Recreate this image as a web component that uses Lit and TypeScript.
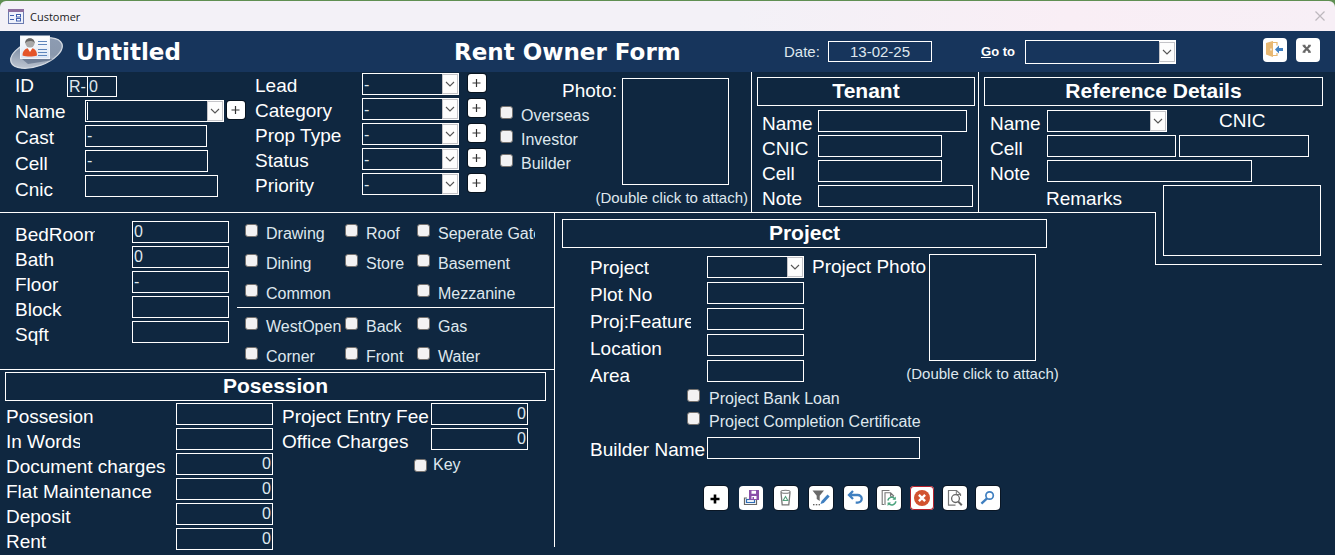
import { LitElement, html, css, svg } from "lit";
import { customElement } from "lit/decorators.js";

type Field = { id: string; label: string; cls: string; value?: string; kind?: "select" | "money" };

const LEAD: Field[] = [
  { id: "lead", label: "Lead", cls: "w97", value: "-" },
  { id: "category", label: "Category", cls: "w97", value: "-" },
  { id: "proptype", label: "Prop Type", cls: "w97", value: "-" },
  { id: "status", label: "Status", cls: "w97", value: "-" },
  { id: "priority", label: "Priority", cls: "w97", value: "-" },
];

const TENANT: Field[] = [
  { id: "t-name", label: "Name", cls: "w149" },
  { id: "t-cnic", label: "CNIC", cls: "w124" },
  { id: "t-cell", label: "Cell", cls: "w124" },
  { id: "t-note", label: "Note", cls: "w155" },
];

const ROOMS: Field[] = [
  { id: "bedroom", label: "BedRoom", cls: "w97", value: "0" },
  { id: "bath", label: "Bath", cls: "w97", value: "0" },
  { id: "floor", label: "Floor", cls: "w97", value: "-" },
  { id: "block", label: "Block", cls: "w97" },
  { id: "sqft", label: "Sqft", cls: "w97" },
];

const POSSESSION: Field[] = [
  { id: "possesion", label: "Possesion", cls: "w97" },
  { id: "words", label: "In Words", cls: "w97" },
  { id: "doc", label: "Document charges", cls: "w97", value: "0", kind: "money" },
  { id: "flat", label: "Flat Maintenance", cls: "w97", value: "0", kind: "money" },
  { id: "deposit", label: "Deposit", cls: "w97", value: "0", kind: "money" },
  { id: "rent", label: "Rent", cls: "w97", value: "0", kind: "money" },
];

const FEES: Field[] = [
  { id: "entry", label: "Project Entry Fee", cls: "w97", value: "0", kind: "money" },
  { id: "office", label: "Office Charges", cls: "w97", value: "0", kind: "money" },
];

const PROJECT: Field[] = [
  { id: "project", label: "Project", cls: "w97", kind: "select" },
  { id: "plot", label: "Plot No", cls: "w97" },
  { id: "feature", label: "Proj:Features", cls: "w97" },
  { id: "location", label: "Location", cls: "w97" },
  { id: "area", label: "Area", cls: "w97" },
];

const icons = {
  add: svg`<path d="M11 8.500v9M6.500 13h9" stroke="#000" stroke-width="2.600"/>`,
  save: svg`<path d="M8 12H5.500v6.500h12V14" fill="none" stroke="#666" stroke-width="1.200"/><rect x="7.500" y="13.500" width="8" height="3" fill="#fff" stroke="#2f6db5" stroke-width="1.200"/><path d="M10 4h10v10H10z" fill="#8a4fa8"/><path d="M12.500 4.800h4.500v3h-4.500zM12.500 10h5v3h-5z" fill="#fff"/><path d="M13.500 11h1.500v2h-1.500z" fill="#8a4fa8"/>`,
  bin: svg`<path d="M7 6.500l1.200 12.300h6.600L16 6.500" fill="none" stroke="#777" stroke-width="1.300"/><ellipse cx="11.500" cy="5.800" rx="4.600" ry="1.500" fill="#fff" stroke="#777" stroke-width="1.100"/><path d="M11.500 10.500l2.300 4H9.200z" fill="none" stroke="#55a07c" stroke-width="1.100"/>`,
  filter: svg`<path d="M3.500 4.500h11.500l-4.300 5.300V15l-3-2V9.800z" fill="#6a6a6a"/><path d="M11.500 18l1-3 6-6.500 2.200 2-6 6.500z" fill="#3f7fc0"/><path d="M4 18.700h7" stroke="#333" stroke-width="1.100" stroke-dasharray="1.500 1.300"/>`,
  undo: svg`<path d="M9 5L5 9l4 4M5.500 9h8.200a4 3.800 0 010 7.600h-2" fill="none" stroke="#3f7fc0" stroke-width="2.300"/>`,
  refresh: svg`<path d="M7 18.500H5.200V4.500h7.300M8 19V6.800h5.600l3.400 3.300M13.500 7v3.300H17" fill="none" stroke="#777" stroke-width="1.100"/><path d="M10.800 14.500a4 4 0 017-1.800M18.800 15.200a4 4 0 01-7 2.300" fill="none" stroke="#4aa37d" stroke-width="1.500"/><path d="M18.800 10.400v3.400h-3.400zM10.600 20v-3.500h3.400z" fill="#4aa37d"/>`,
  cancel: svg`<circle cx="12" cy="12" r="8" fill="#d2522f"/><path d="M8.900 8.900l6.200 6.200M15.100 8.900l-6.200 6.200" stroke="#fff" stroke-width="2.400"/>`,
  preview: svg`<path d="M17.500 10V8.200l-4-3.700h-8v14.600h7" fill="none" stroke="#777" stroke-width="1.200"/><path d="M13.300 4.500v4h4.200" fill="none" stroke="#777"/><circle cx="12.500" cy="12.600" r="3.900" fill="#fff" stroke="#666" stroke-width="1.300"/><path d="M15.300 15.600l3.500 3.700" stroke="#666" stroke-width="2"/>`,
  find: svg`<circle cx="13.600" cy="9.500" r="3.700" fill="none" stroke="#3f7fc0" stroke-width="1.700"/><path d="M11 12.300l-5.600 5.300" stroke="#3f7fc0" stroke-width="2.300"/>`,
};

@customElement("app-root")
export class AppRoot extends LitElement {
  static styles = css`
    :host {
      --panel: #0f2740;
      --bar: #17355c;
      --line: #ffffff;
      --soft: #dfe7ee;
      display: block;
      min-height: 100vh;
      background: var(--panel);
      color: #fff;
      font-family: "Liberation Sans", Arial, sans-serif;
      font-size: 16px;
    }
    * { box-sizing: border-box; }
    h1, h2 { margin: 0; }
    input, select, textarea, button { font: inherit; color: inherit; margin: 0; border-radius: 0; outline: none; }

    .top-edge { background: #5f8f52; padding-top: 1px; }
    .titlebar {
      display: flex; align-items: center; gap: 6px; height: 30px; padding: 0 9px 0 8px;
      background: linear-gradient(90deg, #f3f1f7 0 55%, #f9eef5 80%, #f7eff6);
      border-radius: 6px 6px 0 0; color: #1b1b1b; font: 11px "Open Sans", sans-serif;
    }
    .titlebar .grow { flex: 1; }
    .win-close { display: flex; background: none; border: 0; padding: 0; }

    .header {
      display: grid;
      grid-template-columns: minmax(0, 454fr) minmax(0, 330fr) minmax(0, 197fr) minmax(0, 282fr) minmax(0, 72fr);
      align-items: center; height: 41px; background: var(--bar);
    }
    .brand { display: flex; align-items: center; gap: 12px; padding-left: 10px; }
    .heading { font: bold 23px/30px "DejaVu Sans", sans-serif; white-space: nowrap; }
    .line { display: flex; align-items: center; }
    .date { gap: 9px; font-size: 15px; }
    .date .light { width: 35px; }
    .goto { gap: 10px; }
    .goto label { font-size: 13px; font-weight: bold; white-space: nowrap; }
    .actions { gap: 9px; align-self: start; padding-top: 7px; }

    .form {
      display: grid;
      grid-template-columns: minmax(0, 555fr) minmax(0, 197fr) minmax(0, 227fr) minmax(0, 176fr) minmax(0, 180fr);
      grid-template-rows: 141px 52px auto;
    }
    .person { grid-area: 1 / 1 / 2 / 3; border-right: 1px solid var(--line); border-bottom: 1px solid var(--line); display: flex; padding-left: 15px; align-items: flex-start; }
    .tenant { grid-area: 1 / 3 / 2 / 4; border-right: 1px solid var(--line); border-bottom: 1px solid var(--line); padding: 5px 3px 0 5px; }
    .reference { grid-area: 1 / 4 / 2 / 6; padding: 5px 12px 0 5px; }
    .ref-rule { grid-area: 1 / 4 / 2 / 5; border-bottom: 1px solid var(--line); align-self: end; padding: 0 0 1px 67px; }
    .remarks {
      grid-area: 1 / 5 / 3 / 6; align-self: end; height: 53px; margin-right: 13px;
      border-left: 1px solid var(--line); border-bottom: 1px solid var(--line);
      display: flex; align-items: flex-end; padding: 0 1px 8px 7px;
    }
    .remarks textarea { width: 100%; height: 71px; resize: none; background: var(--panel); border: 1px solid var(--line); padding: 1px; }
    .left { grid-area: 2 / 1 / 4 / 2; }
    .project { grid-area: 2 / 2 / 4 / 5; align-self: start; margin-left: -1px; border-left: 1px solid var(--line); padding: 6px 0 37px 7px; }
    .person > *, .labels, .stack, .box, .combo, .plus, .tool, .photo { flex-shrink: 0; }

    .band { border: 1px solid var(--line); height: 29px; font-size: 21px; line-height: 26px; font-weight: bold; text-align: center; }
    .labels, .stack { display: flex; flex-direction: column; align-items: flex-start; }
    .stack { gap: 3px; }
    .labels label, .lab { font-size: 19px; line-height: 25px; white-space: nowrap; }
    .tall label { line-height: 26px; }
    .taller label { line-height: 27px; }
    .light { color: var(--soft); }
    .box {
      display: block; height: 22px; background: transparent; border: 1px solid var(--line);
      padding: 0 1px; font-size: 16px; color: var(--soft);
    }
    .low { height: 21px; }
    .money { text-align: right; }
    .center { text-align: center; font-size: 15px; }
    .combo { display: grid; grid-template-columns: 1fr 17px; }
    .combo select { grid-area: 1 / 1 / 2 / 3; width: 100%; height: 22px; appearance: none; background: transparent; border: 1px solid var(--line); padding: 0 1px; color: var(--soft); }
    .combo.big select { height: 24px; }
    .combo svg { grid-area: 1 / 2 / 2 / 3; width: 16px; height: calc(100% - 2px); margin-top: 1px; background: #fdfdfd; pointer-events: none; }
    .combo option { color: #111; }
    .combo.active select { background: linear-gradient(#fff, #fff) 1px 1px / 1px 18px no-repeat; }

    .w21 { width: 21px; } .w30 { width: 30px; } .w97 { width: 97px; } .w104 { width: 104px; }
    .w120 { width: 120px; } .w122 { width: 122px; } .w123 { width: 123px; } .w124 { width: 124px; } .w129 { width: 129px; } .w130 { width: 130px; }
    .w133 { width: 133px; } .w139 { width: 139px; } .w149 { width: 149px; } .w151 { width: 151px; }
    .w155 { width: 155px; } .w205 { width: 205px; } .w213 { width: 213px; }

    .plus { width: 18px; height: 18px; padding: 0; border: 0; background: #fff; border-radius: 3px; box-shadow: 0 0 0 1px #07131f; display: flex; }
    .tool { width: 24px; height: 24px; padding: 0; border: 0; background: #fff; border-radius: 4px; box-shadow: 0 0 0 1px #0a1624; display: flex; }
    .flat { box-shadow: none; }
    .danger { box-shadow: inset 0 0 0 1px #b5202c; }

    .check { display: flex; align-items: flex-start; gap: 8px; line-height: 20px; white-space: nowrap; color: var(--soft); }
    .check input { appearance: none; flex: none; width: 13px; height: 13px; background: #f3f2f3; border: 1px solid #76726f; border-radius: 3px; }

    .own-labels { width: 52px; padding-top: 1px; }
    .own { width: 179px; padding-top: 4px; }
    .own .inset { margin-left: 18px; }
    .id-row { display: flex; }
    .id-row .w30 { margin-left: -1px; }
    .name-row { display: flex; gap: 3px; margin-left: 18px; }
    .name-row .plus { margin-top: 1px; }
    .lead-labels { width: 107px; margin-left: 9px; padding-top: 1px; }
    .lead-fields { padding-top: 1px; }
    .plus-col { gap: 7px; padding: 2px 0 0 9px; }
    .media { display: grid; grid-template-columns: 117px 107px 14px; column-gap: 5px; margin-left: 14px; padding-top: 6px; }
    .media .col { display: flex; flex-direction: column; gap: 4px; align-items: flex-start; }
    .media .lab { align-self: flex-end; line-height: 23px; padding-top: 1px; }
    .photo { width: 107px; height: 107px; border: 1px solid var(--line); background: transparent; padding: 0; }
    .caption { font-size: 15px; line-height: 18px; color: var(--soft); white-space: nowrap; }
    .media .caption { grid-column: 1 / 4; padding-top: 4px; justify-self: end; }

    .tenant-body { display: flex; padding: 4px 0 0 5px; }
    .tenant-body .labels { width: 56px; padding-top: 1px; }
    .ref-body { display: flex; padding: 4px 0 0 6px; }
    .ref-body .labels { width: 57px; padding-top: 1px; }
    .ref-line { display: flex; gap: 3px; }
    .ref-line .lab { padding-left: 49px; line-height: 22px; }

    .rooms { display: flex; border-bottom: 1px solid var(--line); height: 157px; }
    .rooms .labels { width: 132px; padding: 9px 0 0 15px; }
    .rooms .labels label { width: 80px; overflow: hidden; }
    .rooms .stack { padding-top: 8px; width: 105px; }
    .amenities { flex: 1; min-width: 0; }
    .grid3 { display: grid; grid-template-columns: 100px 72px 1fr; align-content: start; padding: 9px 0 0 8px; row-gap: 10px; }
    .grid3.first { height: 95px; border-bottom: 1px solid var(--line); padding-top: 11px; }
    .grid3 .clip { width: 118px; overflow: hidden; }

    .poss { padding: 2px 9px 0 5px; }
    .poss-body { display: flex; padding: 2px 0 0 1px; }
    .poss-body .labels { width: 170px; padding-top: 1px; }
    .poss-body .labels label[for="words"] { width: 74px; overflow: hidden; }
    .fees { padding-left: 9px; }
    .fees-row { display: flex; }
    .poss-body .fees-row .labels { width: 149px; }
    .key { padding: 4px 0 0 132px; }
    .key .check { align-items: center; gap: 6px; line-height: 14px; }

    .project .band { width: 485px; max-width: 100%; }
    .proj-body { display: flex; padding: 6px 0 0 28px; align-items: flex-start; }
    .proj-body .labels { width: 117px; }
    .proj-body .labels label { max-width: 101px; overflow: hidden; }
    .proj-body .stack { gap: 4px; padding-top: 2px; }
    .proj-body .lab { width: 117px; margin-left: 8px; line-height: 26px; }
    .proj-photo { display: flex; flex-direction: column; align-items: center; width: 107px; }
    .proj-photo .caption { padding-top: 4px; }
    .proj-checks { display: flex; flex-direction: column; gap: 3px; padding-left: 125px; }
    .proj-checks .check { gap: 9px; }
    .builder { display: flex; padding: 5px 0 0 28px; }
    .builder .lab { width: 117px; line-height: 26px; }
    .toolbar { display: flex; gap: 11px; padding: 23px 0 0 142px; }
    .group { display: flex; gap: 11px; }
    .group.tight { gap: 9px; }
  `;

  private label(f: Field) {
    return html`<label for=${f.id}>${f.label}</label>`;
  }

  private combo(id: string, cls: string, value = "") {
    return html`<div class="combo ${cls}">
      <select id=${id}><option>${value}</option></select>
      <svg viewBox="0 0 16 20"><rect x=".5" y=".5" width="15" height="19" fill="#fdfdfd" stroke="#c4c4c8"/><path d="M4 8l4 4 4-4" fill="none" stroke="#555" stroke-width="1.100"/></svg>
    </div>`;
  }

  private field(f: Field) {
    return f.kind === "select"
      ? this.combo(f.id, f.cls, f.value)
      : html`<input class="box ${f.cls} ${f.kind ?? ""}" id=${f.id} .value=${f.value ?? ""}>`;
  }

  private check(text: string, cls = "") {
    return html`<label class="check ${cls}"><input type="checkbox">${text}</label>`;
  }

  private plus(name: string) {
    return html`<button class="plus" aria-label="Add ${name}"><svg width="18" height="18"><path d="M8.500 5v8M4.500 9h8" stroke="#333" stroke-width="1.200"/></svg></button>`;
  }

  private tool(name: keyof typeof icons, cls = "") {
    return html`<button class="tool ${cls}" aria-label=${name}><svg width="24" height="24" viewBox="0 0 24 24">${icons[name]}</svg></button>`;
  }

  render() {
    return html`
      <div class="top-edge"><div class="titlebar">
        <svg width="16" height="15" viewBox="0 0 16 15"><rect x=".5" y=".5" width="15" height="14" fill="#eef1fb" stroke="#6b7bb0"/><path d="M0 0h16v3H0z" fill="#8d6f9f"/><path d="M2 6.500h4M2 10.500h4" stroke="#3f5fae"/><rect x="8.500" y="5.500" width="4" height="2.500" fill="#fff" stroke="#3f5fae"/><rect x="8.500" y="9.500" width="4" height="2.500" fill="#fff" stroke="#3f5fae"/></svg>
        <span>Customer</span><span class="grow"></span>
        <button class="win-close" aria-label="Close window"><svg width="12" height="12"><path d="M1.500 1.500l9 9M10.500 1.500l-9 9" stroke="#bdb8be" stroke-width="1.200"/></svg></button>
      </div></div>

      <div class="header">
        <div class="brand">
          <svg width="54" height="36" viewBox="0 0 54 36">
            <defs>
              <linearGradient id="disc" x1="0" y1="1" x2="1" y2="0"><stop offset="0" stop-color="#d3d8e0"/><stop offset=".5" stop-color="#8a98ad"/><stop offset="1" stop-color="#8e9db4"/></linearGradient>
              <linearGradient id="card" x1="0" y1="0" x2="0" y2="1"><stop offset="0" stop-color="#fff"/><stop offset="1" stop-color="#dbe6f5"/></linearGradient>
            </defs>
            <ellipse cx="26.500" cy="19" rx="27" ry="13" transform="rotate(-20 26.500 19)" fill="url(#disc)" stroke="#d5dbe3" stroke-width="1.300"/>
            <path d="M12 25l27-1 4 2-25 4z" fill="#3f5170" opacity=".5"/>
            <rect x="10.500" y="2" width="29" height="22.500" fill="url(#card)" stroke="#f2f5fa"/>
            <path d="M12.500 21.500c0-5 3-7.500 7.500-7.500s7 2.500 7 7.500c-4 1.300-10.500 1.300-14.500 0z" fill="#e4552a"/>
            <path d="M17.500 14l2.500 4 2.500-4z" fill="#fff"/>
            <circle cx="20" cy="9" r="4.600" fill="#a9a9a9"/><path d="M15.200 9.500c-.6-7 9.800-7 9.500 0-1-2.200-2.300-2.700-4.500-2.500s-4 .5-5 2.500z" fill="#666"/>
            <path d="M28 7.500h9M28 10.500h9M28 15.500h9M28 18.500h9M28 21.500h9" stroke="#5f86bb" stroke-width="1.200"/>
          </svg>
          <span class="heading">Untitled</span>
        </div>
        <h1 class="heading">Rent Owner Form</h1>
        <div class="line date"><label class="light" for="date">Date:</label><input class="box low w104 center" id="date" .value=${"13-02-25"}></div>
        <div class="line goto"><label for="goto"><u>G</u>o to</label>${this.combo("goto", "w151 big")}</div>
        <div class="line actions">
          <button class="tool flat" aria-label="Exit"><svg width="24" height="24"><path d="M3 5l7-2v16l-7-2.500z" fill="#e8b872"/><path d="M10 4.500h4v3M10 17.500h4V15" fill="none" stroke="#e8b872" stroke-width="1.200"/><path d="M8 10.500v2" stroke="#fff" stroke-width="1.200"/><path d="M12 11.500l4-4v2.500h4v3h-4v2.500z" fill="#3f7fc0"/></svg></button>
          <button class="tool flat" aria-label="Close form"><svg width="24" height="24"><path d="M7.500 7.500l6.500 6.500M14 7.500L7.500 14" stroke="#666" stroke-width="2.200"/><path d="M6.500 7.300h3M12 7.300h3M6.500 14.200h3M12 14.200h3" stroke="#666"/></svg></button>
        </div>
      </div>

      <div class="form">
        <section class="person">
          <div class="labels tall own-labels">
            <label for="id">ID</label><label for="name">Name</label><label for="cast">Cast</label><label for="cell">Cell</label><label for="cnic">Cnic</label>
          </div>
          <div class="stack own">
            <div class="id-row"><input class="box low w21" aria-label="ID prefix" .value=${"R-"}><input class="box low w30" id="id" .value=${"0"}></div>
            <div class="name-row">${this.combo("name", "w139 active")}${this.plus("name")}</div>
            <input class="box w122 inset" id="cast" .value=${"-"}>
            <input class="box w123 inset" id="cell" .value=${"-"}>
            <input class="box w133 inset" id="cnic">
          </div>
          <div class="labels lead-labels">${LEAD.map((f) => this.label(f))}</div>
          <div class="stack lead-fields">${LEAD.map((f) => this.combo(f.id, f.cls, f.value))}</div>
          <div class="stack plus-col">${LEAD.map((f) => this.plus(f.label))}</div>
          <div class="media">
            <div class="col">
              <label class="lab" for="photo">Photo:</label>
              ${["Overseas", "Investor", "Builder"].map((t) => this.check(t))}
            </div>
            <button class="photo" id="photo"></button>
            <span class="caption">(Double click to attach)</span>
          </div>
        </section>

        <section class="tenant">
          <h2 class="band">Tenant</h2>
          <div class="tenant-body">
            <div class="labels">${TENANT.map((f) => this.label(f))}</div>
            <div class="stack">${TENANT.map((f) => this.field(f))}</div>
          </div>
        </section>

        <section class="reference">
          <h2 class="band">Reference Details</h2>
          <div class="ref-body">
            <div class="labels"><label for="r-name">Name</label><label for="r-cell">Cell</label><label for="r-note">Note</label></div>
            <div class="stack">
              <div class="ref-line">${this.combo("r-name", "w120")}<label class="lab" for="r-cnic">CNIC</label></div>
              <div class="ref-line"><input class="box w129" id="r-cell"><input class="box w130" id="r-cnic"></div>
              <input class="box w205" id="r-note">
            </div>
          </div>
        </section>
        <div class="ref-rule"><label class="lab" for="remarks">Remarks</label></div>
        <div class="remarks"><textarea id="remarks"></textarea></div>

        <div class="left">
          <section class="rooms">
            <div class="labels">${ROOMS.map((f) => this.label(f))}</div>
            <div class="stack">${ROOMS.map((f) => this.field(f))}</div>
            <div class="amenities">
              <div class="grid3 first">
                ${this.check("Drawing")}${this.check("Roof")}${this.check("Seperate Gate", "clip")}
                ${this.check("Dining")}${this.check("Store")}${this.check("Basement")}
                ${this.check("Common")}<span></span>${this.check("Mezzanine")}
              </div>
              <div class="grid3">
                ${this.check("WestOpen")}${this.check("Back")}${this.check("Gas")}
                ${this.check("Corner")}${this.check("Front")}${this.check("Water")}
              </div>
            </div>
          </section>
          <section class="poss">
            <h2 class="band">Posession</h2>
            <div class="poss-body">
              <div class="labels">${POSSESSION.map((f) => this.label(f))}</div>
              <div class="stack">${POSSESSION.map((f) => this.field(f))}</div>
              <div class="fees">
                <div class="fees-row">
                  <div class="labels">${FEES.map((f) => this.label(f))}</div>
                  <div class="stack">${FEES.map((f) => this.field(f))}</div>
                </div>
                <div class="key">${this.check("Key")}</div>
              </div>
            </div>
          </section>
        </div>

        <section class="project">
          <h2 class="band">Project</h2>
          <div class="proj-body">
            <div class="labels taller">${PROJECT.map((f) => this.label(f))}</div>
            <div class="stack">${PROJECT.map((f) => this.field(f))}</div>
            <label class="lab" for="p-photo">Project Photo</label>
            <div class="proj-photo"><button class="photo" id="p-photo"></button><span class="caption">(Double click to attach)</span></div>
          </div>
          <div class="proj-checks">${this.check("Project Bank Loan")}${this.check("Project Completion Certificate")}</div>
          <div class="builder"><label class="lab" for="builder">Builder Name</label><input class="box w213" id="builder"></div>
          <div class="toolbar">
            <div class="group">${this.tool("add")}${this.tool("save", "flat")}${this.tool("bin")}${this.tool("filter")}</div>
            <div class="group tight">${this.tool("undo")}${this.tool("refresh")}${this.tool("cancel", "danger")}${this.tool("preview")}${this.tool("find")}</div>
          </div>
        </section>
      </div>
    `;
  }
}
